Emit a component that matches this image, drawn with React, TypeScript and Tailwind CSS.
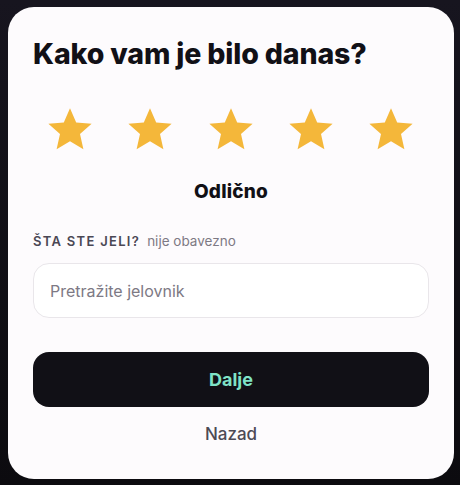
import React, { useState } from 'react';

function Star({ filled }: { filled: boolean }) {
  return (
    <svg viewBox="0 0 24 24" className="h-[48px] w-[48px]">
      <path
        d="M12 1.6l3.1 7.1 7.7.7-5.8 5.1 1.7 7.6L12 18.1l-6.7 4 1.7-7.6-5.8-5.1 7.7-.7z"
        fill={filled ? '#f4b73a' : '#e5e2e8'}
      />
    </svg>
  );
}

export default function App() {
  const [rating, setRating] = useState(5);
  const [query, setQuery] = useState('');
  const labels = ['Loše', 'Može bolje', 'Dobro', 'Vrlo dobro', 'Odlično'];

  return (
    <div className="min-h-screen bg-gradient-to-b from-[#17151f] to-[#0c0b0f] pl-[8px] pr-[6px] pt-[7px] pb-[6px] font-['Inter',sans-serif]">
      <div className="h-[472px] rounded-[26px] bg-[#fdfbfd] px-[25px] pt-[30px]">
        <h1 className="text-[28.5px] font-extrabold leading-[34px] tracking-[-0.005em] text-[#111016]">
          Kako vam je bilo danas?
        </h1>

        <div className="mt-[34px] flex justify-between pl-[13px] pr-[14px]">
          {[1, 2, 3, 4, 5].map((n) => (
            <button key={n} onClick={() => setRating(n)} className="p-0">
              <Star filled={n <= rating} />
            </button>
          ))}
        </div>

        <p className="mt-[27px] text-center text-[19px] font-extrabold leading-[24px] tracking-[0.01em] text-[#111016]">
          {labels[rating - 1]}
        </p>

        <div className="mt-[28px] flex items-baseline gap-[7px]">
          <span className="text-[13px] font-semibold uppercase leading-[18px] tracking-[0.1em] text-[#4a4754]">
            Šta ste jeli?
          </span>
          <span className="text-[13.5px] leading-[18px] text-[#7d7984]">nije obavezno</span>
        </div>

        <input
          value={query}
          onChange={(e) => setQuery(e.target.value)}
          placeholder="Pretražite jelovnik"
          className="mt-[13px] h-[55px] w-full rounded-[16px] border border-[#e9e6ea] bg-white px-[16px] text-[16px] text-[#111016] outline-none placeholder:text-[#7d7984]"
        />

        <button className="mt-[34px] flex h-[55px] w-full items-center justify-center rounded-[16px] bg-[#111016] text-[18px] font-bold text-[#7fe3c7]">
          Dalje
        </button>

        <button className="mt-[11px] block w-full text-center text-[17px] font-medium leading-[32px] text-[#4d4a55]">
          Nazad
        </button>
      </div>
    </div>
  );
}
